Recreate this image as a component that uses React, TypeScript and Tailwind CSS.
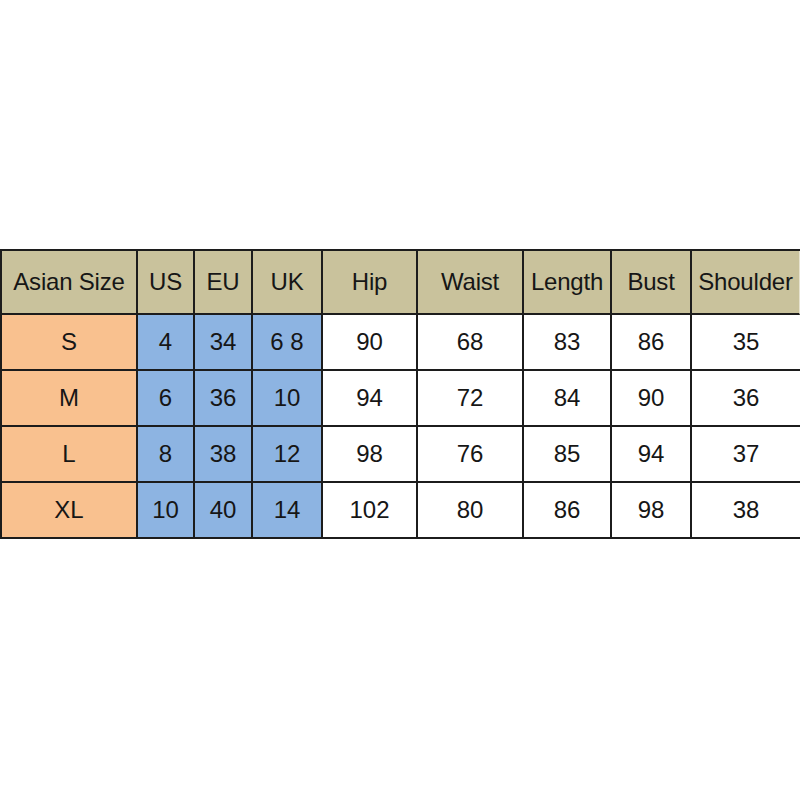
const headers = ["Asian Size", "US", "EU", "UK", "Hip", "Waist", "Length", "Bust", "Shoulder"]

const rows = [
  ["S", "4", "34", "6 8", "90", "68", "83", "86", "35"],
  ["M", "6", "36", "10", "94", "72", "84", "90", "36"],
  ["L", "8", "38", "12", "98", "76", "85", "94", "37"],
  ["XL", "10", "40", "14", "102", "80", "86", "98", "38"],
]

const widths = ["w-[136px]", "w-[57px]", "w-[58px]", "w-[70px]", "w-[95px]", "w-[106px]", "w-[88px]", "w-[80px]", "w-[108px]"]

function cellBg(col: number) {
  if (col === 0) return "bg-[#f9c18f]"
  if (col >= 1 && col <= 3) return "bg-[#8db4e2]"
  return "bg-white"
}

export default function App() {
  return (
    <div className="w-[800px] h-[800px] bg-white pt-[249px] font-['Liberation_Sans',Arial,sans-serif] text-[24px] text-[#161616]">
      <div className="flex flex-col border-t-2 border-l-2 border-[#1c1c1c] w-fit">
        <div className="flex">
          {headers.map((h, i) => (
            <div
              key={h}
              className={`${widths[i]} h-[64px] flex items-center justify-center bg-[#c9c29c] border-b-2 ${i === 8 ? "border-r border-r-[#e6e2cf]" : "border-r-2"} border-[#1c1c1c] whitespace-nowrap tracking-[-0.2px]`}
            >
              {h}
            </div>
          ))}
        </div>
        {rows.map((r) => (
          <div key={r[0]} className="flex">
            {r.map((v, i) => (
              <div
                key={i}
                className={`${widths[i]} h-[56px] flex items-center justify-center ${cellBg(i)} border-b-2 ${i === 8 ? "border-r-0" : "border-r-2"} border-[#1c1c1c]`}
              >
                {v}
              </div>
            ))}
          </div>
        ))}
      </div>
    </div>
  )
}
